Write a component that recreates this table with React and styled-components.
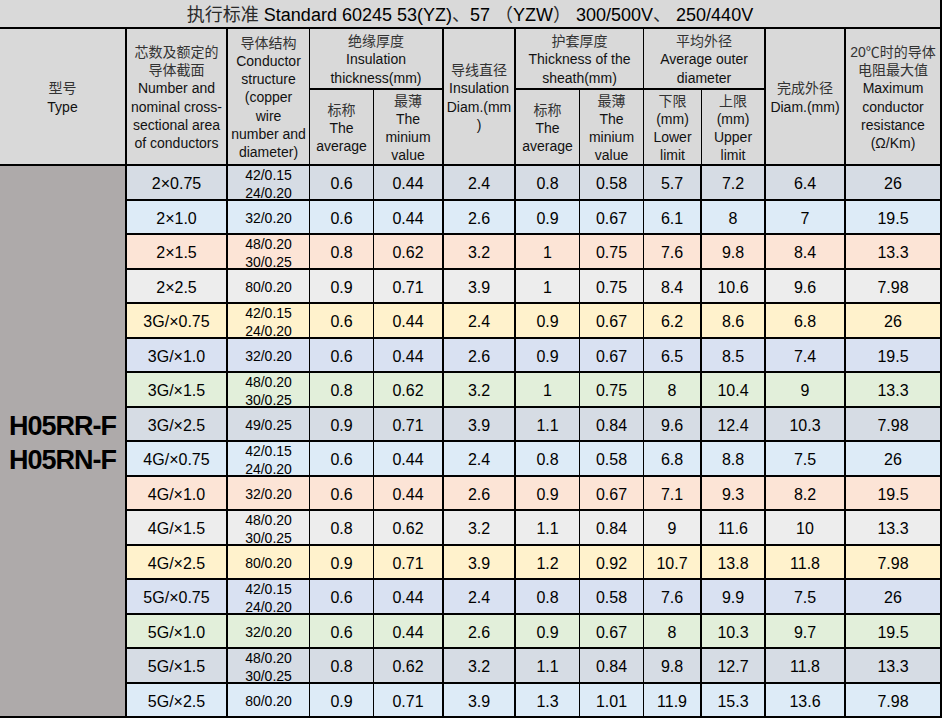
import React from "react";
import styled, { createGlobalStyle } from "styled-components";

const Global = createGlobalStyle`
  html, body { margin: 0; padding: 0; background: #ffffff; }
  body { font-family: "Liberation Sans", "Noto Sans CJK SC", Arial, sans-serif; color: #000; }
`;

const Sheet = styled.div`
  display: grid;
  width: 942px;
  grid-template-columns: 127px 101px 82px 64px 70px 72px 64px 64px 58px 64px 80px 96px;
  grid-template-rows: 29px 61px 76px repeat(16, 34.5px);
  font-family: "Liberation Sans", "Noto Sans CJK SC", Arial, sans-serif;
`;

const Cell = styled.div`
  box-sizing: border-box;
  display: flex;
  flex-direction: column;
  align-items: center;
  justify-content: center;
  text-align: center;
  border-right: ${(p) => (p.$thin ? "1px" : "2px")} solid #000;
  border-bottom: 2px solid #000;
  grid-column: ${(p) => (p.$cols ? `span ${p.$cols}` : "auto")};
  grid-row: ${(p) => (p.$rows ? `span ${p.$rows}` : "auto")};
  white-space: nowrap;
`;

const TitleCell = styled(Cell)`
  grid-column: 1 / -1;
  background: #d9d9d9;
  font-size: 18px;
  color: #000;
  padding-bottom: 1px;
`;

const TitleCjk = styled.span`
  color: #2a2a2a;
  font-family: "Noto Sans CJK SC", sans-serif;
  font-size: 18px;
`;

const HeadCell = styled(Cell)`
  background: #d9d9d9;
  font-size: 14px;
  line-height: 18.2px;
  color: #111;
  padding-top: 2px;
`;

const Line = styled.span`
  display: block;
  color: ${(p) => (p.$cjk ? "#333" : "#111")};
`;

const TypeCell = styled(Cell)`
  background: #aeaaaa;
  font-size: 27px;
  font-weight: 700;
  letter-spacing: -1px;
  line-height: 34px;
  padding-top: 4px;
`;

const DataCell = styled(Cell)`
  background: ${(p) => p.$bg};
  font-size: ${(p) => (p.$small ? "14px" : "16px")};
  line-height: 18px;
  color: #000;
  padding-top: ${(p) => (p.$small ? "3px" : "4px")};
`;

const isCjk = (s) => /[\u4e00-\u9fff]/.test(s);

const Head = ({ lines, ...rest }) => (
  <HeadCell {...rest}>
    {lines.map((l, i) => (
      <Line key={i} $cjk={isCjk(l)}>
        {l}
      </Line>
    ))}
  </HeadCell>
);

const palette = ["#d6dce4", "#ddebf7", "#fce4d6", "#ededed", "#fff2cc", "#d9e1f2", "#e2efda"];

const rows = [
  ["2×0.75", ["42/0.15", "24/0.20"], "0.6", "0.44", "2.4", "0.8", "0.58", "5.7", "7.2", "6.4", "26"],
  ["2×1.0", ["32/0.20"], "0.6", "0.44", "2.6", "0.9", "0.67", "6.1", "8", "7", "19.5"],
  ["2×1.5", ["48/0.20", "30/0.25"], "0.8", "0.62", "3.2", "1", "0.75", "7.6", "9.8", "8.4", "13.3"],
  ["2×2.5", ["80/0.20"], "0.9", "0.71", "3.9", "1", "0.75", "8.4", "10.6", "9.6", "7.98"],
  ["3G/×0.75", ["42/0.15", "24/0.20"], "0.6", "0.44", "2.4", "0.9", "0.67", "6.2", "8.6", "6.8", "26"],
  ["3G/×1.0", ["32/0.20"], "0.6", "0.44", "2.6", "0.9", "0.67", "6.5", "8.5", "7.4", "19.5"],
  ["3G/×1.5", ["48/0.20", "30/0.25"], "0.8", "0.62", "3.2", "1", "0.75", "8", "10.4", "9", "13.3"],
  ["3G/×2.5", ["49/0.25"], "0.9", "0.71", "3.9", "1.1", "0.84", "9.6", "12.4", "10.3", "7.98"],
  ["4G/×0.75", ["42/0.15", "24/0.20"], "0.6", "0.44", "2.4", "0.8", "0.58", "6.8", "8.8", "7.5", "26"],
  ["4G/×1.0", ["32/0.20"], "0.6", "0.44", "2.6", "0.9", "0.67", "7.1", "9.3", "8.2", "19.5"],
  ["4G/×1.5", ["48/0.20", "30/0.25"], "0.8", "0.62", "3.2", "1.1", "0.84", "9", "11.6", "10", "13.3"],
  ["4G/×2.5", ["80/0.20"], "0.9", "0.71", "3.9", "1.2", "0.92", "10.7", "13.8", "11.8", "7.98"],
  ["5G/×0.75", ["42/0.15", "24/0.20"], "0.6", "0.44", "2.4", "0.8", "0.58", "7.6", "9.9", "7.5", "26"],
  ["5G/×1.0", ["32/0.20"], "0.6", "0.44", "2.6", "0.9", "0.67", "8", "10.3", "9.7", "19.5"],
  ["5G/×1.5", ["48/0.20", "30/0.25"], "0.8", "0.62", "3.2", "1.1", "0.84", "9.8", "12.7", "11.8", "13.3"],
  ["5G/×2.5", ["80/0.20"], "0.9", "0.71", "3.9", "1.3", "1.01", "11.9", "15.3", "13.6", "7.98"],
];

// thin right border after these column indexes (0 = first data column after Type)
const thinCols = new Set([1, 2, 5, 6]);

export default function App() {
  return (
    <>
      <Global />
      <Sheet>
        <TitleCell>
          <span>
            <TitleCjk>执行标准</TitleCjk> Standard 60245 53(YZ)<TitleCjk>、</TitleCjk>57 <TitleCjk>（</TitleCjk>YZW<TitleCjk>）</TitleCjk> 300/500V<TitleCjk>、</TitleCjk> 250/440V
          </span>
        </TitleCell>

        <Head $rows={2} lines={["型号", "Type"]} />
        <Head
          $rows={2}
          lines={["芯数及额定的", "导体截面", "Number and", "nominal cross-", "sectional area", "of conductors"]}
        />
        <Head
          $rows={2}
          $thin
          lines={["导体结构", "Conductor", "structure", "(copper", "wire", "number and", "diameter)"]}
        />
        <Head $cols={2} lines={["绝缘厚度", "Insulation", "thickness(mm)"]} />
        <Head $rows={2} lines={["导线直径", "Insulation", "Diam.(mm", ")"]} />
        <Head $cols={2} $thin lines={["护套厚度", "Thickness of the", "sheath(mm)"]} />
        <Head $cols={2} lines={["平均外径", "Average outer", "diameter"]} />
        <Head $rows={2} lines={["完成外径", "Diam.(mm)"]} />
        <Head
          $rows={2}
          lines={["20℃时的导体", "电阻最大值", "Maximum", "conductor", "resistance", "(Ω/Km)"]}
        />

        <Head $thin lines={["标称", "The", "average"]} />
        <Head lines={["最薄", "The", "minium", "value"]} />
        <Head $thin lines={["标称", "The", "average"]} />
        <Head $thin lines={["最薄", "The", "minium", "value"]} />
        <Head $thin lines={["下限", "(mm)", "Lower", "limit"]} />
        <Head lines={["上限", "(mm)", "Upper", "limit"]} />

        <TypeCell $rows={16}>
          <span>H05RR-F</span>
          <span>H05RN-F</span>
        </TypeCell>

        {rows.map((row, r) =>
          row.map((v, c) => (
            <DataCell
              key={`${r}-${c}`}
              $bg={palette[r % palette.length]}
              $thin={thinCols.has(c)}
              $small={c === 1}
            >
              {Array.isArray(v) ? v.map((l, i) => <span key={i}>{l}</span>) : v}
            </DataCell>
          ))
        )}
      </Sheet>
    </>
  );
}
